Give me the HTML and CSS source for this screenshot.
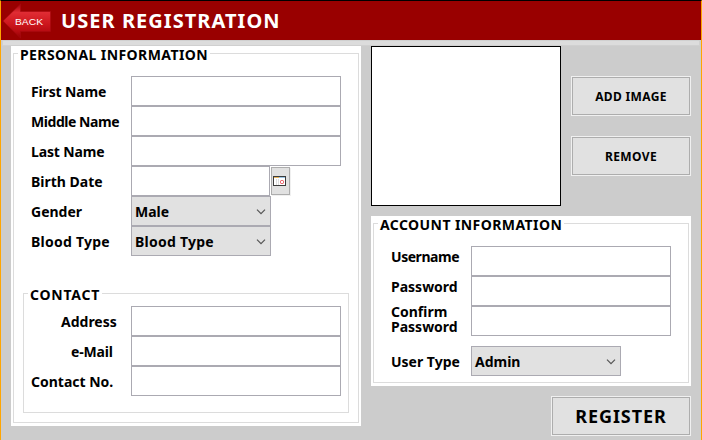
FILE: index.html
```html
<!DOCTYPE html>
<html lang="en">
<head>
<meta charset="utf-8">
<title>User Registration</title>
<link rel="stylesheet" href="styles.css">
</head>
<body>
<div class="window">
  <header class="header">
    <svg class="back" width="49" height="36" viewBox="0 0 49 36" role="button">
      <defs><linearGradient id="red" x1="0" y1="0" x2="0" y2="1"><stop offset="0" stop-color="#a00408"/><stop offset=".25" stop-color="#e02c34"/><stop offset=".6" stop-color="#cc161c"/><stop offset=".8" stop-color="#b80c12"/><stop offset="1" stop-color="#940004"/></linearGradient></defs>
      <path d="M1 18 L18.500 1 V8.500 H48.500 V28.500 H18.500 V35 Z" fill="url(#red)" stroke="#a80a10" stroke-width=".6"/>
      <text x="13" y="22" class="back-text" textLength="28" lengthAdjust="spacingAndGlyphs">BACK</text>
    </svg>
    <h1 class="title">USER REGISTRATION</h1>
  </header>
  <div class="strip"></div>
  <main class="main">
    <section class="panel personal">
      <fieldset class="group">
        <legend class="legend">PERSONAL INFORMATION</legend>
        <div class="rows">
          <label class="row"><span class="label snug">First Name</span><span class="input"></span></label>
          <label class="row"><span class="label tight">Middle Name</span><span class="input"></span></label>
          <label class="row"><span class="label snug">Last Name</span><span class="input"></span></label>
          <div class="row"><span class="label">Birth Date</span><span class="input date"></span><span class="date-btn">
            <svg width="13" height="10" viewBox="0 0 13 10"><rect width="13" height="10" fill="#3c3c3c"/><rect x="1" y="1" width="11" height="8" fill="#fff"/><rect x="1" y="1" width="5" height="1" fill="#e8b45c"/><rect x="6" y="1" width="6" height="1" fill="#9cc4e4"/><path d="M3.500 3V9M5.500 3V9" stroke="#ddd"/><rect x="7.500" y="4.500" width="3" height="3" rx="1" fill="none" stroke="#e8434e"/></svg>
          </span></div>
          <div class="row"><span class="label">Gender</span><span class="select">Male<svg class="chev" width="10" height="6" viewBox="0 0 10 6"><path d="M1 .7L5 4.700L9 .7"/></svg></span></div>
          <div class="row"><span class="label wide">Blood Type</span><span class="select wide">Blood Type<svg class="chev" width="10" height="6" viewBox="0 0 10 6"><path d="M1 .7L5 4.700L9 .7"/></svg></span></div>
        </div>
        <fieldset class="group contact">
          <legend class="legend">CONTACT</legend>
          <div class="rows">
            <label class="row"><span class="label in-3">Address</span><span class="input"></span></label>
            <label class="row"><span class="label snug in-4">e-Mail</span><span class="input"></span></label>
            <label class="row"><span class="label">Contact No.</span><span class="input"></span></label>
          </div>
        </fieldset>
      </fieldset>
    </section>
    <div class="side">
      <div class="picture-row">
        <div class="picture"></div>
        <div class="actions"><button class="btn">ADD IMAGE</button><button class="btn">REMOVE</button></div>
      </div>
      <section class="panel account">
        <fieldset class="group">
          <legend class="legend">ACCOUNT INFORMATION</legend>
          <div class="rows">
            <label class="row"><span class="label raised tight">Username</span><span class="input"></span></label>
            <label class="row"><span class="label raised">Password</span><span class="input"></span></label>
            <label class="row"><span class="label two">Confirm<br>Password</span><span class="input"></span></label>
            <div class="row type"><span class="label">User Type</span><span class="select">Admin<svg class="chev" width="10" height="6" viewBox="0 0 10 6"><path d="M1 .7L5 4.700L9 .7"/></svg></span></div>
          </div>
        </fieldset>
      </section>
      <button class="btn register">REGISTER</button>
    </div>
  </main>
</div>
</body>
</html>
```
FILE: styles.css
```css
* { box-sizing: border-box; }
body { margin: 0; font: bold 14px/16px "Noto Sans", sans-serif; color: #000; }
.window { width: 702px; height: 440px; overflow: hidden; background: #ccc; border-top: 1px solid #000; border-left: 1px solid #ffa500; border-right: 1px solid #ffa500; }
.header { height: 39px; background: #900; display: flex; align-items: center; }
.back { margin-left: 1px; }
.back-text { font: 9.5px "Liberation Sans", sans-serif; fill: #fff; }
.title { margin: 0 0 0 10px; font-size: 20px; line-height: 24px; letter-spacing: 1.05px; color: #fff; white-space: nowrap; }
.strip { height: 6px; margin: 0 1px; background: #dcdcdc; border: 1px solid #d0d0d0; }
.main { display: flex; gap: 10px; padding-left: 10px; }
.panel { background: #fff; }
.personal { width: 350px; height: 380px; padding: 0 2px; }
.group { margin: 0; padding: 0; border: 1px solid #dcdcdc; min-width: 0; width: 346px; height: 377px; }
.legend { display: block; margin-left: 4px; padding: 3px 2px 0; font-size: 14px; line-height: 12px; height: 15px; letter-spacing: .42px; white-space: nowrap; }
.contact .legend { letter-spacing: .75px; }
.rows { padding: 15px 0 0 17px; }
.row { display: grid; grid-template-columns: 100px 210px; grid-template-rows: 30px; height: 30px; align-items: center; }
.row:has(.date-btn) { grid-template-columns: 100px 139px 21px; }
.label { padding-top: 1px; white-space: nowrap; }
.snug { letter-spacing: -.15px; }
.tight { letter-spacing: -.45px; }
.wide { letter-spacing: .25px; }
.raised { padding: 0 0 9px; }
.input { height: 30px; border: 1px solid #abaab2; background: #fff; }
.date-btn { height: 28px; width: 19px; margin-left: 1px; border: 1px solid #adadad; background: #e1e1e1; display: flex; align-items: center; justify-content: center; box-shadow: 1px 1px #f0f0f0; }
.date-btn svg { margin-right: 2px; }
.select { width: 140px; height: 30px; border: 1px solid #abaab2; background: #e1e1e1; display: flex; align-items: center; justify-content: space-between; padding: 1px 4px 0 3px; white-space: nowrap; }
.chev path { fill: none; stroke: #555; stroke-width: 1.2; }
.contact { margin: 30px 0 0 9px; width: 326px; height: 127px; }
.contact .rows { padding: 5px 0 0 7px; }
.in-3 { padding-left: 30px; }
.in-4 { padding-left: 40px; }
.side { width: 320px; display: flex; flex-direction: column; gap: 10px; }
.picture-row { display: flex; gap: 10px; }
.picture { width: 190px; height: 160px; border: 1px solid #000; background: #fff; }
.actions { padding-top: 30px; display: flex; flex-direction: column; gap: 20px; }
.btn { width: 120px; height: 40px; padding: 1px 0 0; border: 1px solid #f0f0f0; background: #e1e1e1; box-shadow: inset 0 0 0 1px #adadad; color: #000; font: bold 12px/16px "Noto Sans", sans-serif; letter-spacing: .35px; white-space: nowrap; }
.account { height: 170px; padding: 0 2px; }
.account .group { width: 316px; height: 167px; }
.account .row { grid-template-columns: 80px 200px; }
.account .select { width: 150px; }
.two { line-height: 15px; padding: 0 0 5px; }
.type { margin-top: 10px; }
.register { width: 140px; padding: 0; font-size: 18px; line-height: 24px; letter-spacing: .95px; align-self: flex-end; }
```
